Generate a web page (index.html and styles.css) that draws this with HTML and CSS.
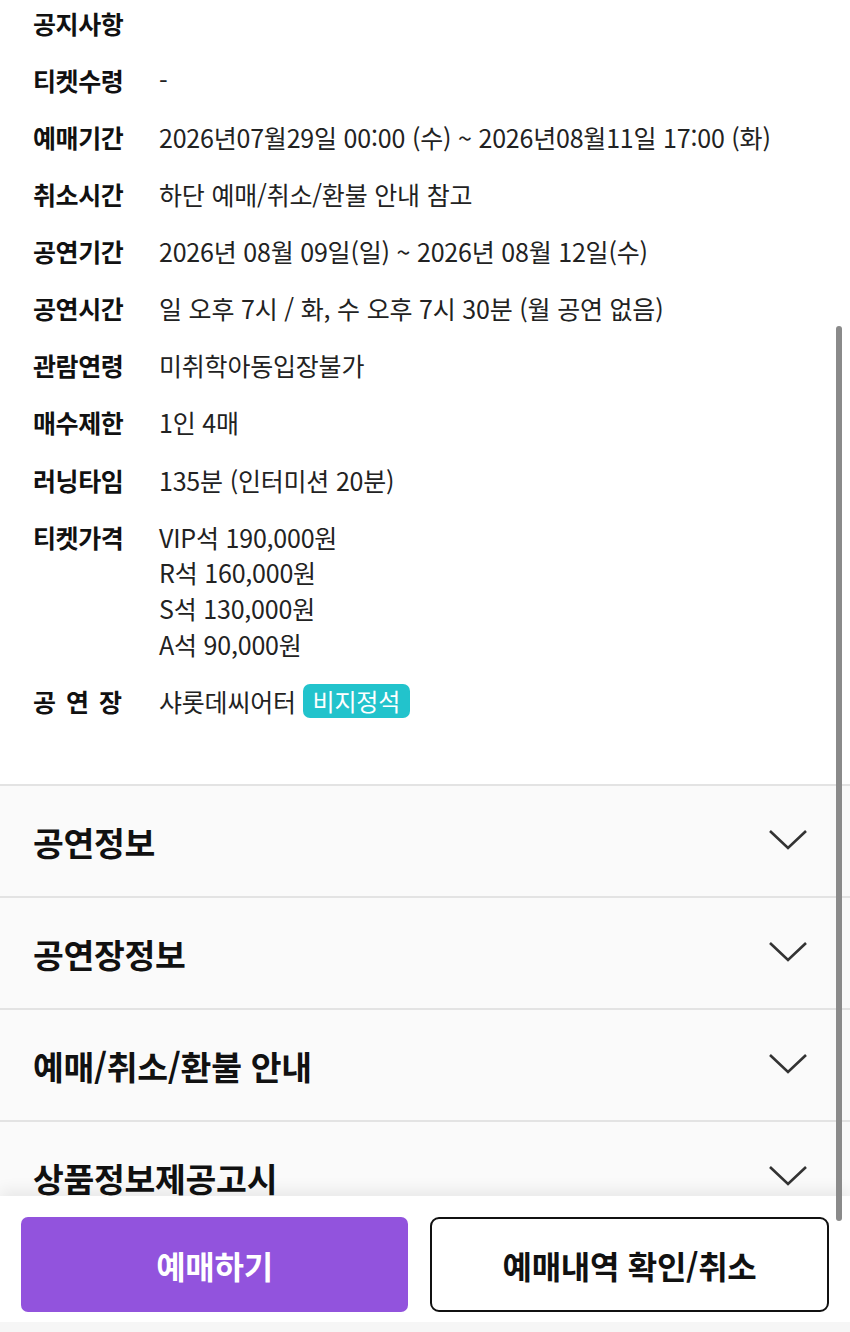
FILE: index.html
```html
<!DOCTYPE html>
<html lang="ko">
<head>
<meta charset="utf-8">
<title>공연 상세</title>
<link rel="stylesheet" href="styles.css">
</head>
<body>
<main class="page">
  <section class="info">
    <div class="row"><div class="label">공지사항</div><div class="value"></div></div>
    <div class="row"><div class="label">티켓수령</div><div class="value">-</div></div>
    <div class="row"><div class="label">예매기간</div><div class="value">2026년07월29일 00:00 (수) ~ 2026년08월11일 17:00 (화)</div></div>
    <div class="row"><div class="label">취소시간</div><div class="value">하단 예매/취소/환불 안내 참고</div></div>
    <div class="row"><div class="label">공연기간</div><div class="value">2026년 08월 09일(일) ~ 2026년 08월 12일(수)</div></div>
    <div class="row"><div class="label">공연시간</div><div class="value">일 오후 7시 / 화, 수 오후 7시 30분 (월 공연 없음)</div></div>
    <div class="row"><div class="label">관람연령</div><div class="value">미취학아동입장불가</div></div>
    <div class="row"><div class="label">매수제한</div><div class="value">1인 4매</div></div>
    <div class="row"><div class="label">러닝타임</div><div class="value">135분 (인터미션 20분)</div></div>
    <div class="row"><div class="label">티켓가격</div><div class="value">VIP석 190,000원<br>R석 160,000원<br>S석 130,000원<br>A석 90,000원</div></div>
    <div class="row"><div class="label spaced">공 연 장</div><div class="value">샤롯데씨어터 <span class="badge">비지정석</span></div></div>
  </section>

  <section class="accordion">
    <div class="acc-item"><h2 class="acc-title">공연정보</h2><svg class="chev" viewBox="0 0 40 22" width="40" height="22"><path d="M2 2 L20 19 L38 2" fill="none" stroke="#333" stroke-width="2.6"/></svg></div>
    <div class="acc-item"><h2 class="acc-title">공연장정보</h2><svg class="chev" viewBox="0 0 40 22" width="40" height="22"><path d="M2 2 L20 19 L38 2" fill="none" stroke="#333" stroke-width="2.6"/></svg></div>
    <div class="acc-item"><h2 class="acc-title">예매/취소/환불 안내</h2><svg class="chev" viewBox="0 0 40 22" width="40" height="22"><path d="M2 2 L20 19 L38 2" fill="none" stroke="#333" stroke-width="2.6"/></svg></div>
    <div class="acc-item"><h2 class="acc-title">상품정보제공고시</h2><svg class="chev" viewBox="0 0 40 22" width="40" height="22"><path d="M2 2 L20 19 L38 2" fill="none" stroke="#333" stroke-width="2.6"/></svg></div>
  </section>
</main>

<div class="bottom-bar">
  <div class="buttons">
    <button class="btn btn-primary">예매하기</button>
    <button class="btn btn-outline">예매내역 확인/취소</button>
  </div>
</div>

<div class="scrollbar"></div>
</body>
</html>
```

FILE: styles.css
```css
html, body {
  margin: 0;
  padding: 0;
  overflow: hidden;
  background: #ffffff;
}

body {
  font-family: "Noto Sans CJK KR", "Noto Sans", sans-serif;
  color: #1a1a1a;
  height: 1332px;
}

.page {
  display: flex;
  flex-direction: column;
}

.info {
  padding: 6px 20px 65px 33px;
  display: flex;
  flex-direction: column;
  gap: 21.4px;
}

.row {
  display: grid;
  grid-template-columns: 126px 1fr;
  font-size: 25px;
  line-height: 35.67px;
}

.label {
  font-weight: 700;
  color: #111;
  letter-spacing: -0.4px;
}

.label.spaced {
  letter-spacing: 1.5px;
}

.value {
  color: #222;
  min-height: 35.67px;
  letter-spacing: -0.2px;
}

.badge {
  display: inline-block;
  background: #22c3cc;
  color: #ffffff;
  font-size: 24px;
  line-height: 34px;
  padding: 0 10px;
  border-radius: 7px;
  vertical-align: 1px;
  margin-left: 0;
}

.accordion {
  display: flex;
  flex-direction: column;
}

.acc-item {
  height: 110px;
  border-top: 2px solid #e3e3e3;
  background: #fafafa;
  display: flex;
  align-items: center;
  justify-content: space-between;
  padding: 0 42px 0 33px;
}

.acc-title {
  margin: 0;
  font-size: 33.5px;
  font-weight: 700;
  color: #111;
  letter-spacing: -0.3px;
}

.chev {
  display: block;
  margin-top: -2px;
}

.bottom-bar {
  position: fixed;
  left: 0;
  right: 0;
  bottom: 0;
  height: 136px;
  background: #ffffff;
  box-shadow: 0 -6px 14px rgba(0, 0, 0, 0.07);
  border-bottom: 10px solid #f6f6f6;
  box-sizing: border-box;
  padding: 21px 21px 0 21px;
}

.buttons {
  display: grid;
  grid-template-columns: 387px 1fr;
  gap: 22px;
}

.btn {
  height: 95px;
  font-family: "Noto Sans CJK KR", "Noto Sans", sans-serif;
  font-size: 32px;
  font-weight: 700;
  letter-spacing: -0.3px;
  cursor: pointer;
}

.btn-primary {
  background: #9253dd;
  color: #ffffff;
  border: none;
  border-radius: 7px;
}

.btn-outline {
  background: #ffffff;
  color: #111;
  border: 2px solid #111;
  border-radius: 9px;
}

.scrollbar {
  position: fixed;
  top: 326px;
  right: 8px;
  width: 6px;
  height: 895px;
  background: #8a8a8a;
  border-radius: 3px;
}
```
